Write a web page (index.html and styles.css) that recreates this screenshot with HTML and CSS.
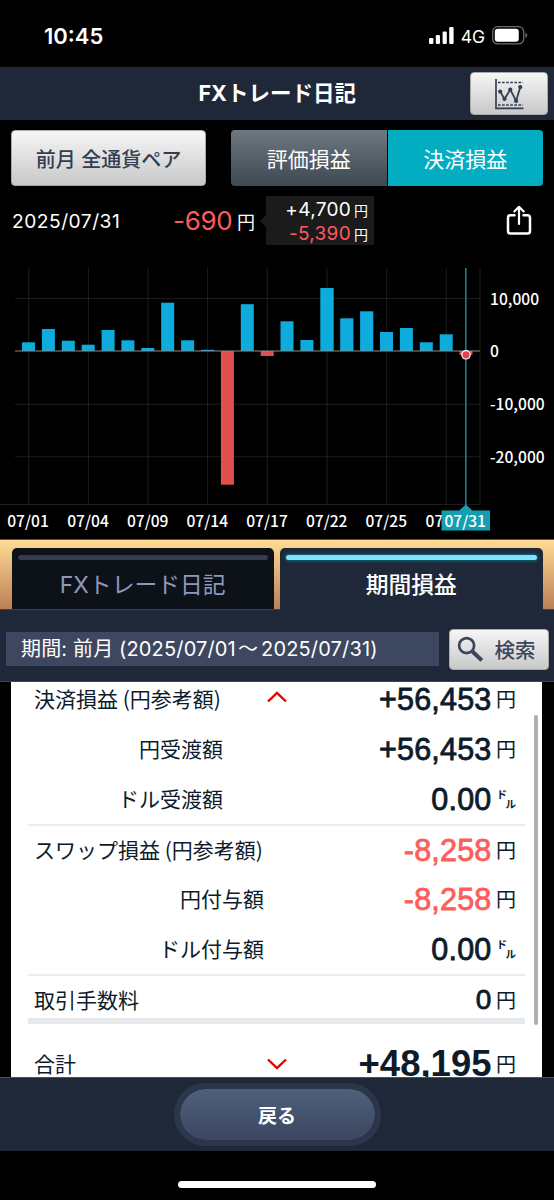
FILE: index.html
```html
<!DOCTYPE html>
<html lang="ja">
<head>
    <meta charset="UTF-8">
    <meta name="viewport" content="width=device-width, initial-scale=1.0">
    <title>FXトレード日記</title>
    <link rel="stylesheet" href="styles.css">
</head>
<body>
<div class="status-bar">
    <span class="time">10:45</span>
    <svg class="signal" width="26" height="18" viewBox="0 0 26 18" fill="#fff">
        <rect x="0" y="11" width="4.4" height="6" rx="1.3"/>
        <rect x="6.8" y="8" width="4.2" height="9" rx="1.3"/>
        <rect x="13.6" y="4.4" width="4.2" height="12.6" rx="1.3"/>
        <rect x="20.2" y="0" width="4.4" height="17" rx="1.3"/>
    </svg>
    <span class="network">4G</span>
    <svg class="battery" width="36" height="19" viewBox="0 0 36 19">
        <rect x="0.7" y="0.7" width="31" height="17.2" rx="5" fill="none" stroke="#6b6b6b" stroke-width="1.3"/>
        <rect x="2.8" y="2.8" width="24" height="13" rx="3" fill="#fff"/>
        <path d="M33.4 6.5q1.8 1 1.8 2.8t-1.8 2.8z" fill="#6b6b6b"/>
    </svg>
</div>

<div class="header">
    <h1>FXトレード日記</h1>
    <button class="btn-light btn-chart">
        <svg width="30" height="32" viewBox="0 0 30 32" fill="none" stroke="#343e53">
            <path d="M2 1v29.3h27.5" stroke-width="1.7"/>
            <path d="M4 4.5h25M4 27h25" stroke-width="1.7" stroke-dasharray="2.6 1.5"/>
            <path d="M6.2 13.6l4.3 7.3 5.8-9.3 5.8 11.3 4.2-13.8" stroke-width="1.8"/>
            <g fill="#343e53" stroke="none">
                <circle cx="6.2" cy="13.6" r="2.1"/>
                <circle cx="10.5" cy="20.9" r="2.1"/>
                <circle cx="16.3" cy="11.6" r="2.1"/>
                <circle cx="22.1" cy="22.9" r="2.1"/>
                <circle cx="26.3" cy="9.1" r="2.1"/>
            </g>
        </svg>
    </button>
</div>

<div class="toolbar">
    <button class="btn-light btn-pair">前月 全通貨ペア</button>
    <div class="segment">
        <button>評価損益</button>
        <button class="active">決済損益</button>
    </div>
</div>

<div class="summary">
    <span class="date">2025/07/31</span>
    <span class="amount">-690</span>
    <span class="yen">円</span>
    <div class="detail">
        <div>+4,700<small>円</small></div>
        <div><b>-5,390</b><small>円</small></div>
    </div>
    <svg class="share" width="26" height="31" viewBox="0 0 26 31" fill="none" stroke="#fff" stroke-width="2.5" stroke-linecap="round" stroke-linejoin="round">
        <path d="M8.5 10.2H4.6Q2 10.2 2 12.8v13.1q0 2.6 2.6 2.6h16.8q2.6 0 2.6-2.6V12.8q0-2.6-2.6-2.6h-3.9"/>
        <path d="M13 19V2.2M8.3 6.5L13 1.9l4.7 4.6" stroke-width="2.2"/>
    </svg>
</div>

<svg class="chart" width="554" height="294" viewBox="0 0 554 294">
    <!-- grid -->
    <g stroke="#fff" stroke-opacity="0.11">
        <path d="M15 53.5h465M15 159.2h465M15 211.7h465M0 259.5h480"/>
        <path d="M28.7 23v237M88.4 23v237M148 23v237M207.6 23v237M267.3 23v237M327 23v237M386.7 23v237M446.3 23v237M480 23v237"/>
    </g>
    <!-- bars -->
    <g fill="#0dacdc">
        <rect x="22" y="97.3" width="13" height="8.7"/>
        <rect x="41.9" y="84" width="13" height="22"/>
        <rect x="61.8" y="95.7" width="13" height="10.3"/>
        <rect x="81.7" y="99.7" width="13" height="6.3"/>
        <rect x="101.6" y="85" width="13" height="21"/>
        <rect x="121.4" y="95.3" width="13" height="10.7"/>
        <rect x="141.3" y="103" width="13" height="3"/>
        <rect x="161.2" y="57.7" width="13" height="48.3"/>
        <rect x="181.1" y="95.3" width="13" height="10.7"/>
        <rect x="201" y="104.8" width="13" height="1.2"/>
        <rect x="240.8" y="59.2" width="13" height="46.8"/>
        <rect x="280.5" y="76.3" width="13" height="29.7"/>
        <rect x="300.4" y="95" width="13" height="11"/>
        <rect x="320.3" y="43" width="13.4" height="63"/>
        <rect x="340.2" y="73.3" width="13.2" height="32.7"/>
        <rect x="360.1" y="66.3" width="13.2" height="39.7"/>
        <rect x="380" y="87" width="13" height="19"/>
        <rect x="399.9" y="83" width="13" height="23"/>
        <rect x="419.8" y="97.3" width="13" height="8.7"/>
        <rect x="439.7" y="89.3" width="13" height="16.7"/>
    </g>
    <g fill="#e05051">
        <rect x="220.9" y="106" width="13" height="133.7"/>
        <rect x="260.7" y="106" width="13" height="5"/>
        <rect x="459.5" y="106" width="13" height="3.7"/>
    </g>
    <path d="M15 106h465" stroke="#8c8c8c" stroke-width="1.2"/>
    <g class="axis">
        <text x="490" y="59.5">10,000</text>
        <text x="490" y="112">0</text>
        <text x="490" y="165">-10,000</text>
        <text x="490" y="217.5">-20,000</text>
    </g>
    <g class="axis" text-anchor="middle">
        <text x="28" y="282">07/01</text>
        <text x="88" y="282">07/04</text>
        <text x="147.7" y="282">07/09</text>
        <text x="207.3" y="282">07/14</text>
        <text x="267" y="282">07/17</text>
        <text x="326.7" y="282">07/22</text>
        <text x="386.3" y="282">07/25</text>
    </g>
    <text class="axis" x="425.5" y="282">07</text>
    <!-- selected day -->
    <path d="M465.8 23v238" stroke="#187e8f" stroke-width="1.6"/>
    <path d="M441.5 265.5h17.8l6.5-6 6.5 6H490v20h-48.5z" fill="#149fb0"/>
    <text class="axis" x="465.2" y="282" text-anchor="middle">07/31</text>
    <circle cx="466" cy="109.8" r="4.2" fill="#e83f4f" stroke="#fff" stroke-width="1.2"/>
</svg>

<div class="tabs">
    <div class="tab"><i></i>FXトレード日記</div>
    <div class="tab active"><i></i>期間損益</div>
</div>

<div class="search-bar">
    <div class="period">期間: 前月 (2025/07/01<span class="tilde">〜</span>2025/07/31)</div>
    <button class="btn-light btn-search">
        <svg width="27" height="27" viewBox="0 0 27 27" fill="none" stroke="#3a465d">
            <circle cx="9.6" cy="9.6" r="7.5" stroke-width="2.7"/>
            <path d="M15.2 15.2l9.6 9.2" stroke-width="4"/>
        </svg>
        検索
    </button>
</div>

<div class="list-wrap">
    <div class="list">
        <div class="row">
            <span class="label">決済損益 (円参考額)</span>
            <svg class="arrow" width="22" height="14" viewBox="0 0 22 14"><path d="M2 11.5l9-8.5 9 8.5"/></svg>
            <span class="value">+56,453</span><span class="unit">円</span>
        </div>
        <div class="row">
            <span class="label sub">円受渡額</span>
            <span class="value">+56,453</span><span class="unit">円</span>
        </div>
        <div class="row">
            <span class="label sub">ドル受渡額</span>
            <span class="value">0.00</span><span class="unit doll"><span>ド</span><span>ル</span></span>
        </div>
        <div class="row line">
            <span class="label">スワップ損益 (円参考額)</span>
            <span class="value minus">-8,258</span><span class="unit">円</span>
        </div>
        <div class="row">
            <span class="label sub wide">円付与額</span>
            <span class="value minus">-8,258</span><span class="unit">円</span>
        </div>
        <div class="row">
            <span class="label sub wide">ドル付与額</span>
            <span class="value">0.00</span><span class="unit doll"><span>ド</span><span>ル</span></span>
        </div>
        <div class="row line fee">
            <span class="label">取引手数料</span>
            <span class="value">0</span><span class="unit">円</span>
        </div>
        <div class="row total">
            <span class="label">合計</span>
            <svg class="arrow" width="22" height="14" viewBox="0 0 22 14"><path d="M2 2.5l9 8.5 9-8.5"/></svg>
            <span class="value">+48,195</span><span class="unit">円</span>
        </div>
    </div>
    <div class="scrollbar"></div>
</div>

<div class="footer">
    <button class="btn-back">戻る</button>
</div>
<div class="home"></div>
</body>
</html>
```
FILE: styles.css
```css
* {
    box-sizing: border-box;
}
body {
    margin: 0;
    width: 554px;
    height: 1200px;
    overflow: hidden;
    background: #000;
    color: #fff;
    font-family: Inter, "Noto Sans CJK JP", sans-serif;
}
button {
    font-family: inherit;
    border: none;
    padding: 0;
    color: #fff;
}
svg {
    display: block;
    flex: none;
}
.status-bar {
    height: 67px;
    display: flex;
    align-items: center;
    padding: 4px 26px 0 44px;
}
.time {
    font-size: 22px;
    font-weight: 600;
    margin-right: auto;
}
.network {
    font-size: 17.5px;
    margin: 2px 7px 0 6px;
}
.header {
    height: 53px;
    background: #1f2838;
    display: flex;
    align-items: center;
    justify-content: flex-end;
    padding-right: 6px;
}
.header h1 {
    margin: 0 114px 0 0;
    font-size: 21.5px;
    font-weight: 700;
    line-height: 53px;
    white-space: nowrap;
}
.btn-light {
    display: flex;
    align-items: center;
    justify-content: center;
    background: linear-gradient(#f6f6f6, #c8c8c8);
    border: 1px solid #aaa;
    border-radius: 4px;
    color: #343e50;
}
.btn-chart {
    width: 78px;
    height: 43px;
}
.toolbar {
    display: flex;
    justify-content: space-between;
    padding: 10px 11px 0;
}
.btn-pair {
    width: 195px;
    height: 56px;
    font-size: 20px;
    font-weight: 500;
}
.segment {
    display: flex;
    gap: 1px;
    width: 312px;
    height: 56px;
    border-radius: 4px;
    overflow: hidden;
}
.segment button {
    flex: 1;
    font-size: 21px;
    background: linear-gradient(#6d7881, #3d4851);
}
.segment .active {
    background: #02adc1;
}
.summary {
    display: flex;
    align-items: center;
    height: 49px;
    margin-top: 10px;
    padding: 0 22px 0 12px;
}
.date {
    width: 161px;
    font-size: 19.2px;
    letter-spacing: 0.5px;
}
.amount {
    width: 64px;
    font-size: 26px;
    letter-spacing: -0.3px;
    color: #ff5a5f;
}
.yen {
    font-size: 18px;
}
.detail {
    position: relative;
    width: 108px;
    height: 49px;
    margin-left: auto;
    padding: 2px 6px 0 0;
    background: #1b1b1b;
    font-size: 19px;
    text-align: right;
}
.detail::before {
    content: "";
    position: absolute;
    left: -6px;
    top: 19px;
    border: 6px solid transparent;
    border-left: 0;
    border-right-color: #1b1b1b;
}
.detail div {
    height: 24px;
    line-height: 24px;
    letter-spacing: 0.3px;
    white-space: nowrap;
}
.detail b {
    font-weight: 400;
    color: #ff5a5f;
}
.detail small {
    font-size: 14px;
    letter-spacing: 0;
    margin-left: 3px;
}
.share {
    margin-left: 132px;
}
.chart .axis {
    font-family: "Noto Sans CJK JP", sans-serif;
    font-size: 15.6px;
    font-weight: 500;
    fill: #fff;
}
.tabs {
    display: flex;
    gap: 6px;
    height: 71px;
    padding: 8px 11.5px 0;
    background: linear-gradient(#ffdc94, #bd7f57);
    border-top: 1px solid #465266;
    border-bottom: 1px solid #3b4354;
}
.tab {
    flex: 1;
    padding: 7px 6px 0;
    border-radius: 5px 5px 0 0;
    background: #0d1118;
    color: #8d99bb;
    font-size: 22.8px;
    line-height: 50px;
    text-align: center;
    white-space: nowrap;
}
.tab i {
    display: block;
    height: 5px;
    border-radius: 3px;
    background: #333c4d;
}
.tab.active {
    background: #1f2838;
    margin-bottom: -1px;
    color: #fff;
    font-weight: 500;
}
.tab.active i {
    background: #7fe3ff;
    box-shadow: 0 0 3px 1px #0e6a7a;
}
.search-bar {
    display: flex;
    align-items: center;
    justify-content: space-between;
    height: 72px;
    padding: 0 5px 0 6px;
    background: #1f2838;
    border-bottom: 1px solid #39435a;
}
.period {
    width: 433px;
    height: 34px;
    margin-top: 7px;
    padding-left: 15px;
    background: #3d4860;
    font-size: 20px;
    letter-spacing: 0.15px;
    line-height: 35px;
    white-space: nowrap;
}
.tilde {
    margin: 0 3px 0 2px;
}
.btn-search {
    width: 100px;
    height: 41px;
    margin-top: 7px;
    padding-right: 6px;
    gap: 11px;
    font-size: 20.5px;
    font-weight: 500;
    color: #3a465d;
}
.list-wrap {
    position: relative;
    width: 531px;
    height: 395px;
    margin-left: 11px;
    overflow: hidden;
    background: #fff;
}
.list {
    margin: -8px 17px 0;
    color: #0d1b2a;
}
.row {
    display: flex;
    align-items: center;
    height: 50px;
    padding: 0 9px 0 6px;
}
.label {
    padding-bottom: 2px;
    font-size: 21px;
    font-family: "Noto Sans CJK JP", sans-serif;
    white-space: nowrap;
}
.sub {
    width: 189px;
    text-align: right;
}
.wide {
    width: 230px;
}
.arrow {
    margin: 0 0 4px 45px;
    fill: none;
    stroke: #e60000;
    stroke-width: 2.4;
}
.value {
    margin-left: auto;
    font-family: "Liberation Sans", Arial, sans-serif;
    font-size: 30.5px;
    letter-spacing: 0.2px;
    -webkit-text-stroke: 0.8px currentColor;
}
.minus {
    color: #fd5d5b;
}
.unit {
    width: 24.5px;
    padding-bottom: 1px;
    font-family: "Noto Sans CJK JP", sans-serif;
    font-size: 20px;
    text-align: right;
}
.doll {
    display: flex;
    justify-content: flex-end;
    height: 22px;
    font-size: 10.5px;
    font-weight: 700;
    line-height: 11px;
}
.doll span + span {
    align-self: flex-end;
    margin-left: -1.5px;
}
.line {
    border-top: 2px solid #ececee;
}
.fee {
    padding-top: 5px;
    border-bottom: 6px solid #e8e9ec;
}
.fee .value {
    font-size: 28px;
}
.total {
    height: 77px;
    padding-top: 2px;
}
.total .label {
    width: 187px;
}
.total .arrow {
    margin-bottom: 0;
}
.total .value {
    font-size: 36.5px;
    font-weight: 700;
    letter-spacing: 0;
    -webkit-text-stroke: 0;
}
.scrollbar {
    position: absolute;
    right: 4px;
    top: 33px;
    width: 4px;
    height: 310px;
    border-radius: 2px;
    background: #afafaf;
}
.footer {
    height: 74px;
    padding-top: 5px;
    background: #1f2838;
    border-top: 1px solid #465266;
}
.btn-back {
    display: block;
    width: 207px;
    height: 63px;
    margin: 0 auto;
    border: 6px solid #2c364a;
    border-radius: 32px;
    background: linear-gradient(#4f607a, #3b4660) padding-box;
    font-size: 19px;
    font-weight: 700;
}
.home {
    width: 198px;
    height: 7px;
    margin: 30px auto 0;
    border-radius: 4px;
    background: #fff;
}
```
